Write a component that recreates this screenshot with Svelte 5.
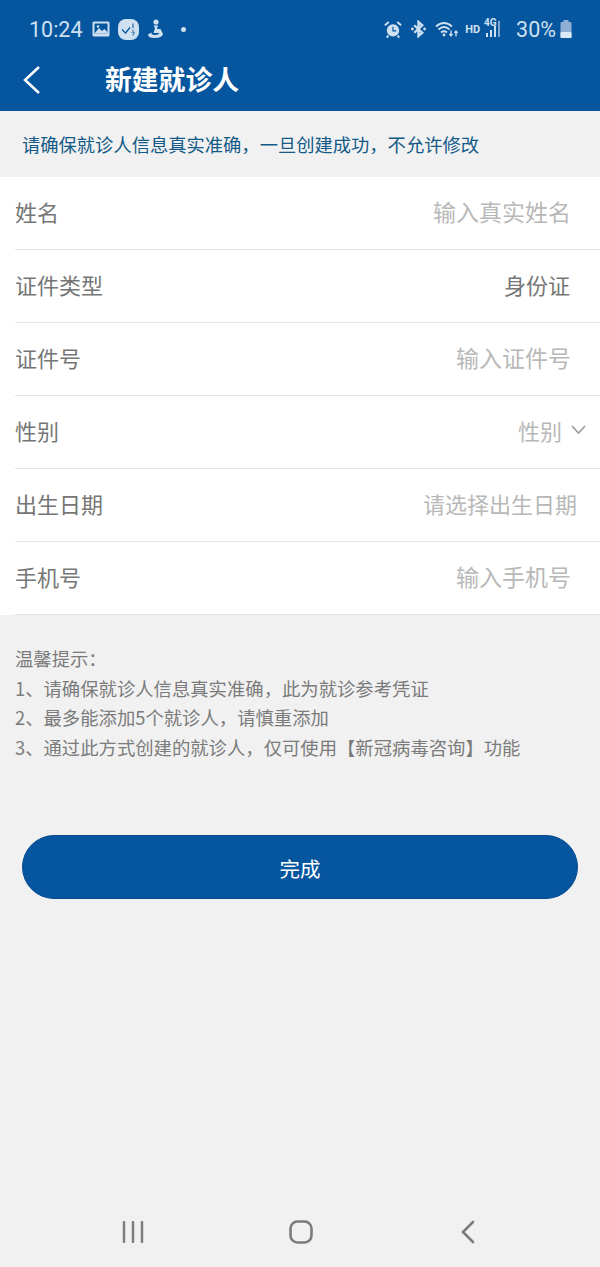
<script>
	const rows = [
		{ label: '姓名', value: '输入真实姓名', kind: 'input' },
		{ label: '证件类型', value: '身份证', kind: 'fixed' },
		{ label: '证件号', value: '输入证件号', kind: 'input' },
		{ label: '性别', value: '性别', kind: 'select' },
		{ label: '出生日期', value: '请选择出生日期', kind: 'date' },
		{ label: '手机号', value: '输入手机号', kind: 'input' }
	];

	const tips = [
		'温馨提示：',
		'1、请确保就诊人信息真实准确，此为就诊参考凭证',
		'2、最多能添加5个就诊人，请慎重添加',
		'3、通过此方式创建的就诊人，仅可使用【新冠病毒咨询】功能'
	];
</script>

<div class="page">
	<header>
		<div class="status">
			<span class="time">10:24</span>
			<svg class="ic" width="18" height="16" viewBox="0 0 18 16">
				<rect x="0.5" y="0.5" width="17" height="15" rx="1.5" fill="#cfe0f0" />
				<rect x="2.5" y="2.5" width="13" height="10" fill="#05569f" />
				<path d="M2.5 12.5 L7 7 L10 10 L12.5 8 L15.5 11 V12.5 Z" fill="#cfe0f0" />
				<circle cx="6" cy="5.5" r="1.3" fill="#cfe0f0" />
			</svg>
			<svg class="ic" width="21" height="21" viewBox="0 0 21 21">
				<rect width="21" height="21" rx="8" fill="#cfe0f0" />
				<path d="M4 10.5 L7.5 14 L12 8.5" fill="none" stroke="#05569f" stroke-width="1.2" />
				<path d="M15 4.5 V9 M15 10.5 V11.5 M13.5 13.5 Q15 12 16.3 13.5 Q16 15 15 15.5 V16.5" fill="none" stroke="#05569f" stroke-width="1" />
			</svg>
			<svg class="ic" width="17" height="20" viewBox="0 0 17 20">
				<circle cx="9" cy="3" r="2.6" fill="#cfe0f0" />
				<path d="M6.5 6.5 H11 L10 10 H13.5 L16 15 Q15 19 8 19 Q1 19 1 15.5 L4.500 13.500 Q4 16 8 16 Q11.500 16 12.500 14 H6.500 L8 9 Z" fill="#cfe0f0" />
			</svg>
			<span class="dot"></span>
			<span class="grow"></span>
			<svg class="ic alarm" width="18" height="19" viewBox="0 0 19 19">
				<circle cx="9.5" cy="10.5" r="6.5" fill="#cfe0f0" />
				<path d="M9.5 6.5 V11 H13" fill="none" stroke="#05569f" stroke-width="1.3" />
				<path d="M1 5 L5 1.5 M18 5 L14 1.5 M4.5 16 L3 18 M14.5 16 L16 18" stroke="#cfe0f0" stroke-width="2.200" />
			</svg>
			<svg class="ic bt" width="15" height="18" viewBox="0 0 16 18">
				<path d="M3.500 5 L12 13 L8 16.500 V1.500 L12 5 L3.500 13" fill="none" stroke="#cfe0f0" stroke-width="2.500" />
				<circle cx="1.500" cy="9" r="1.500" fill="#cfe0f0" />
				<circle cx="14.500" cy="9" r="1.500" fill="#cfe0f0" />
			</svg>
			<svg class="ic wifi" width="24" height="19" viewBox="0 0 24 18">
				<path d="M1 6 Q9 -1 17 6 M3.500 9 Q9 4 14.500 9 M6 12 Q9 9.500 12 12" fill="none" stroke="#cfe0f0" stroke-width="1.700" />
				<circle cx="9" cy="14.500" r="1.400" fill="#cfe0f0" />
				<path d="M16 10 V15 M14.500 13.500 L16 15.500 L17.500 13.500 M21 16 V11 M19.500 12.500 L21 10.500 L22.500 12.500" fill="none" stroke="#cfe0f0" stroke-width="1.300" />
			</svg>
			<span class="hd">HD</span>
			<span class="signal">
				<span class="g4">4G</span>
				<svg width="20" height="20" viewBox="0 0 20 20">
					<path d="M2 14 h2 v4 h-2 z M6 11 h2 v7 h-2 z M10 7 h2 v11 h-2 z" fill="#cfe0f0" />
					<path d="M14 2 h2 v16 h-2 z" fill="#7fa6cf" />
				</svg>
			</span>
			<span class="pct">30%</span>
			<svg class="batt" width="12" height="19" viewBox="0 0 12 19">
				<rect x="3.500" y="0" width="5" height="2" fill="#8fb0d4" />
				<rect x="0.500" y="2" width="11" height="16" rx="1" fill="#8fb0d4" />
				<rect x="0.500" y="12" width="11" height="6" rx="1" fill="#dce8f3" />
			</svg>
		</div>
		<div class="bar">
			<svg class="back" width="20" height="30" viewBox="0 0 20 30">
				<path d="M17 2 L3 15 L17 28" fill="none" stroke="#fff" stroke-width="2.500" />
			</svg>
			<h1>新建就诊人</h1>
		</div>
	</header>

	<p class="notice">请确保就诊人信息真实准确，一旦创建成功，不允许修改</p>

	<section class="form">
		{#each rows as row}
			<div class="row">
				<span class="label">{row.label}</span>
				<span class="value {row.kind}">{row.value}</span>
				{#if row.kind === 'select'}
					<svg class="chev" width="15" height="10" viewBox="0 0 15 10">
						<path d="M1 1 L7.500 8 L14 1" fill="none" stroke="#9a9a9a" stroke-width="1.600" />
					</svg>
				{/if}
			</div>
		{/each}
	</section>

	<section class="tips">
		{#each tips as tip}
			<p>{tip}</p>
		{/each}
	</section>

	<div class="action">
		<button type="button">完成</button>
	</div>

	<nav>
		<svg width="22" height="22" viewBox="0 0 22 22">
			<path d="M2 1 V21 M11 1 V21 M20 1 V21" stroke="#7c7c7c" stroke-width="2.400" stroke-linecap="round" />
		</svg>
		<svg class="home" width="24" height="24" viewBox="0 0 24 24">
			<rect x="1.500" y="1.500" width="21" height="21" rx="7" fill="none" stroke="#7c7c7c" stroke-width="2.600" />
		</svg>
		<svg width="14" height="24" viewBox="0 0 14 24">
			<path d="M12 2 L2 12 L12 22" fill="none" stroke="#7c7c7c" stroke-width="2.600" stroke-linecap="round" />
		</svg>
	</nav>
</div>

<style>
	:global(body) {
		background: #f1f1f1;
	}

	.page {
		width: 600px;
		height: 1267px;
		display: flex;
		flex-direction: column;
		background: #f1f1f1;
		font-family: 'Noto Sans CJK SC', 'Liberation Sans', sans-serif;
		overflow: hidden;
	}

	header {
		height: 111px;
		background: #05569f;
		color: #fff;
	}

	.status {
		height: 58px;
		padding: 0 28px 0 29px;
		display: flex;
		align-items: center;
		color: #cfe0f0;
	}

	.time {
		font-family: Roboto, sans-serif;
		font-size: 21.500px;
		margin-right: 9px;
	}

	.ic {
		margin-right: 8px;
		flex: none;
	}

	.dot {
		width: 5px;
		height: 5px;
		border-radius: 50%;
		background: #cfe0f0;
		margin-left: 9px;
	}

	.grow {
		flex: 1;
	}

	.alarm {
		margin-right: 9px;
	}

	.bt {
		margin-right: 9px;
	}

	.wifi {
		margin-right: 6px;
	}

	.hd {
		font-family: Roboto, sans-serif;
		font-size: 11px;
		font-weight: 700;
		margin-right: 4px;
	}

	.signal {
		position: relative;
		width: 20px;
		height: 20px;
		margin-right: 12px;
	}

	.g4 {
		position: absolute;
		left: 0;
		top: -2px;
		font-family: Roboto, sans-serif;
		font-size: 10px;
		font-weight: 700;
	}

	.pct {
		font-family: Roboto, sans-serif;
		font-size: 21.500px;
		margin-right: 4px;
	}

	.batt {
		flex: none;
	}

	.bar {
		height: 44px;
		display: flex;
		align-items: center;
		padding-left: 22px;
	}

	.back {
		flex: none;
	}

	h1 {
		margin: 0 0 2px 63px;
		font-size: 26.800px;
		font-weight: 700;
		line-height: 1;
	}

	.notice {
		margin: 0;
		height: 66px;
		padding-left: 22px;
		display: flex;
		align-items: center;
		font-size: 18.300px;
		color: #135a88;
	}

	.form {
		background: #fff;
	}

	.row {
		box-sizing: border-box;
		height: 73px;
		margin-left: 15px;
		padding: 0 29px 4px 0;
		display: flex;
		align-items: center;
		border-bottom: 1px solid #e4e4e4;
		font-size: 22px;
	}

	.label {
		color: #767676;
		flex: 1;
	}

	.value {
		color: #b8b8b8;
	}

	.input {
		font-size: 23px;
	}

	.fixed {
		color: #767676;
		margin-right: 1px;
	}

	.date {
		margin-right: -6px;
	}

	.chev {
		margin: 0 -15px 0 9px;
	}

	.tips {
		margin-top: 29px;
		padding-left: 15px;
		color: #7b7b7b;
		font-size: 18.350px;
	}

	.tips p {
		margin: 0;
		height: 29.700px;
		line-height: 29.700px;
		white-space: nowrap;
	}

	.action {
		margin-top: 72px;
		padding: 0 22px 0 22px;
	}

	button {
		width: 100%;
		height: 64px;
		padding: 2px 0 0;
		border: 1px solid #034a90;
		border-radius: 32px;
		background: #05569f;
		color: #fff;
		font: inherit;
		font-size: 20.500px;
	}

	nav {
		margin-top: auto;
		height: 70px;
		padding: 0 125px 0 121.500px;
		display: flex;
		align-items: center;
		justify-content: space-between;
	}

	.home {
		margin-right: 3px;
	}
</style>
